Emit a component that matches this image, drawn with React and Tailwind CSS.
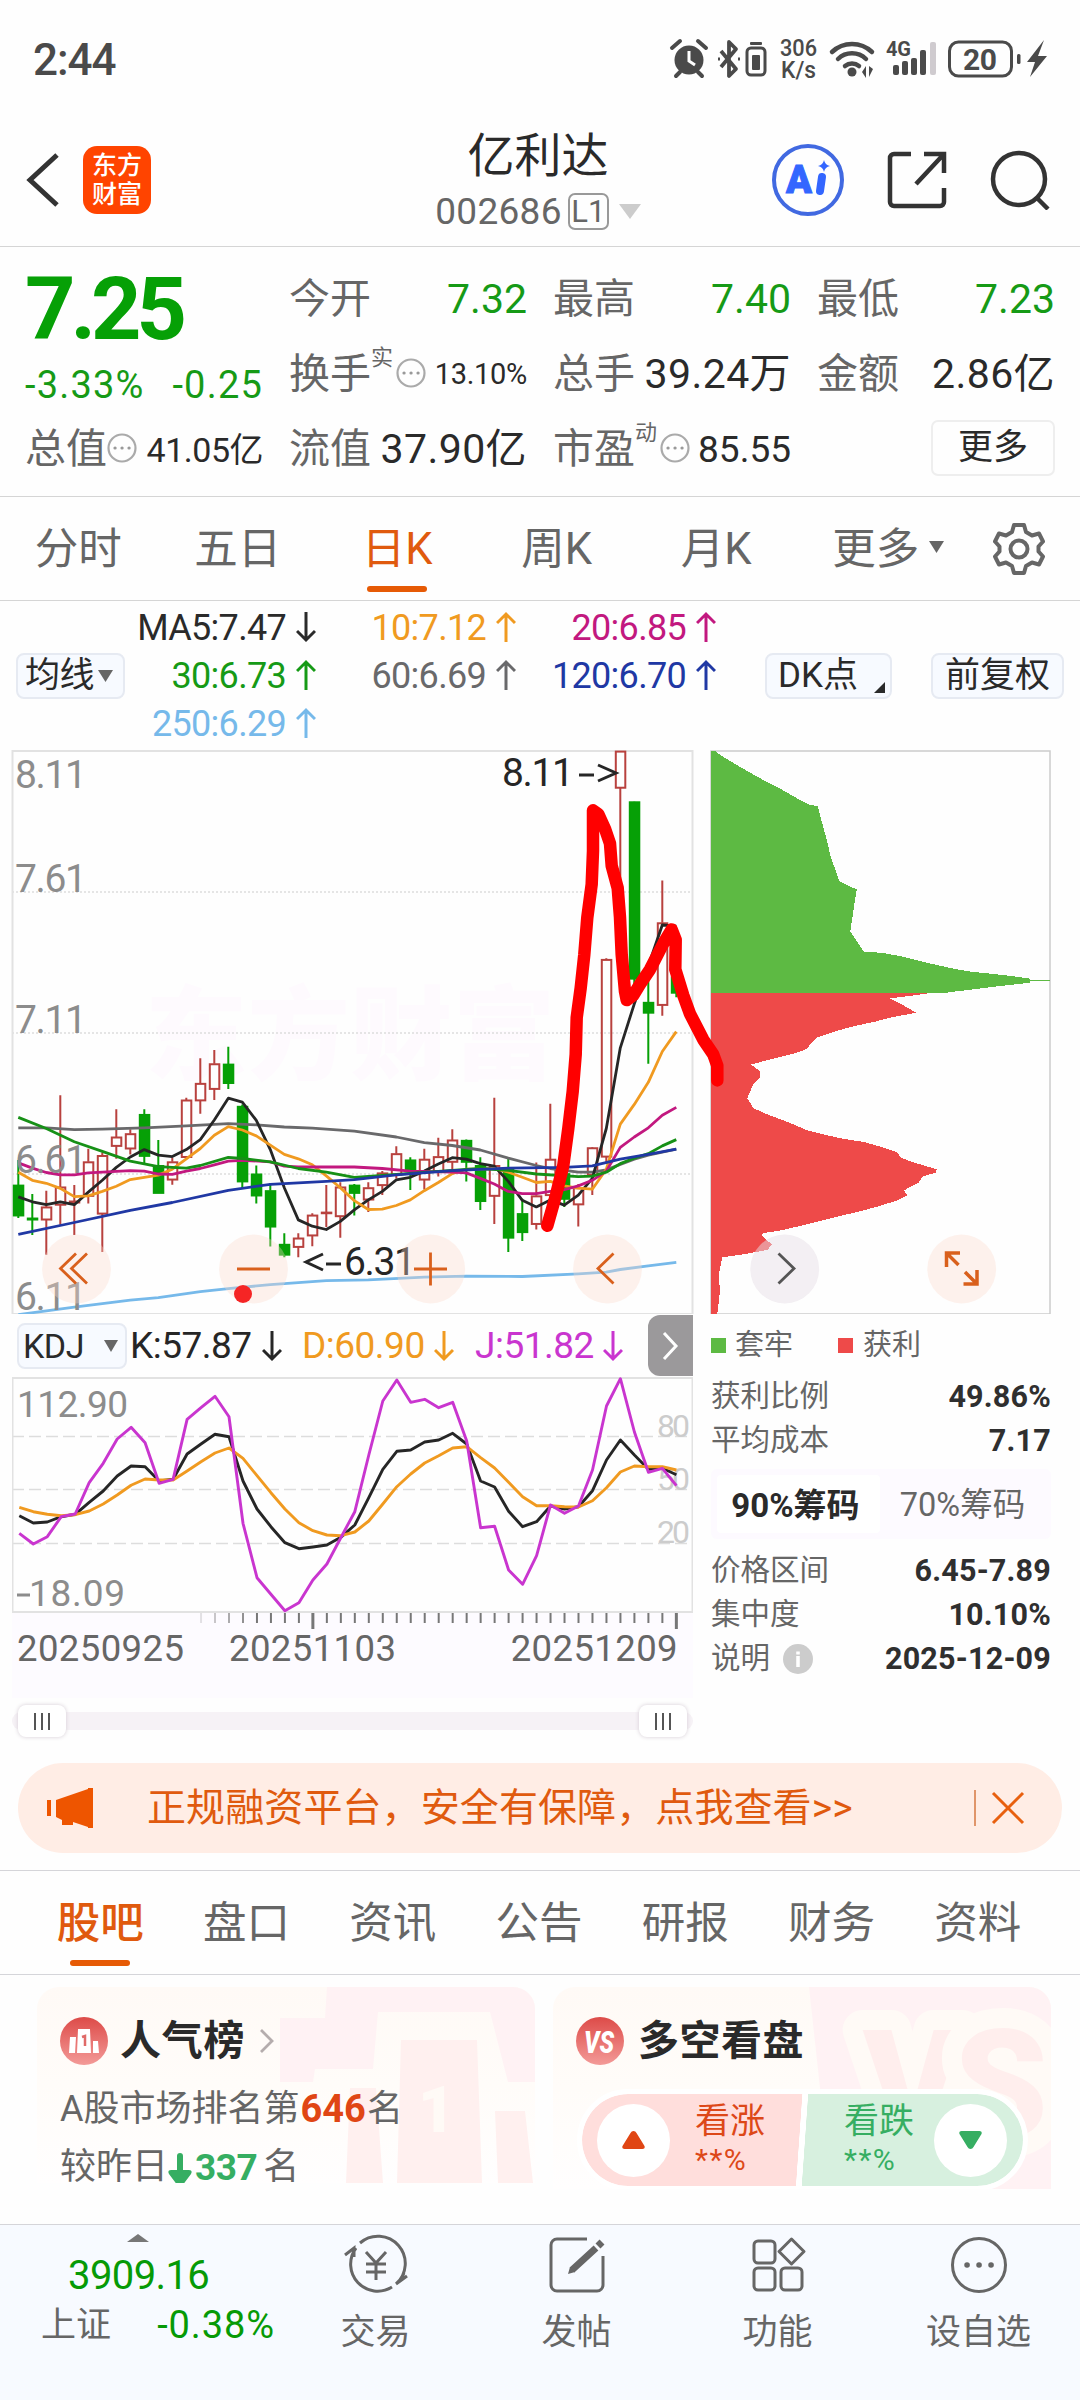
import clsx from 'clsx';

const RED = '#b8413e';
const GREEN = '#06a006';

// [high, body top, body bottom, low, up]
const candles = [
    [1135, 1203, 1285, 1292, 0], [1227, 1292, 1296, 1338, 0], [1218, 1262, 1296, 1391, 1], [960, 1208, 1256, 1310, 1],
    [1203, 1246, 1250, 1338, 1], [1105, 1140, 1232, 1253, 1], [1115, 1123, 1280, 1384, 1], [998, 1073, 1097, 1132, 1],
    [1052, 1064, 1104, 1120, 1], [998, 1012, 1124, 1145, 0], [1081, 1150, 1224, 1224, 0], [1130, 1140, 1188, 1202, 1],
    [967, 973, 1127, 1130, 1], [860, 928, 974, 1010, 1], [838, 875, 943, 973, 1], [829, 876, 927, 943, 0],
    [985, 990, 1193, 1213, 0], [1150, 1173, 1231, 1253, 0], [1197, 1218, 1315, 1369, 0], [1333, 1363, 1391, 1398, 0],
    [1333, 1346, 1370, 1398, 1], [1279, 1284, 1339, 1368, 1], [1203, 1276, 1279, 1316, 1], [1195, 1208, 1287, 1345, 1],
    [1200, 1203, 1224, 1285, 0], [1195, 1210, 1242, 1276, 1], [1165, 1170, 1203, 1230, 1], [1098, 1118, 1175, 1185, 1],
    [1128, 1135, 1165, 1216, 0], [1105, 1133, 1188, 1215, 1], [1075, 1126, 1165, 1180, 1], [1052, 1081, 1140, 1170, 1],
    [1080, 1082, 1140, 1193, 0], [1128, 1150, 1246, 1270, 0], [967, 1150, 1232, 1308, 1], [1130, 1160, 1345, 1384, 0],
    [1240, 1280, 1330, 1354, 0], [1142, 1232, 1308, 1323, 1], [983, 1133, 1230, 1300, 1], [1165, 1172, 1240, 1262, 0],
    [1200, 1210, 1255, 1315, 1], [1100, 1102, 1175, 1230, 1], [590, 593, 1126, 1145, 1], [30, 30, 129, 400, 1],
    [166, 167, 645, 680, 0], [640, 709, 737, 875, 0], [380, 494, 716, 745, 1], [600, 640, 683, 695, 0],
];

// [bar index, value] pairs
const averages = [
    {color: '#69696b', points: [[0, 1048], [2, 1048], [4, 1053], [6, 1052], [9, 1048], [12, 1043], [15, 1037], [17, 1040], [19, 1046], [21, 1049], [24, 1057], [27, 1073], [29, 1088], [31, 1096], [33, 1108], [35, 1130], [37, 1150], [38, 1158], [40, 1168], [41, 1168], [42, 1162], [43, 1147], [44, 1133], [45, 1122], [47, 1106]]},
    {color: '#262626', points: [1235, 1248, 1256, 1248, 1256, 1222, 1190, 1155, 1127, 1107, 1122, 1126, 1107, 1080, 1027, 968, 979, 1028, 1107, 1210, 1297, 1314, 1323, 1301, 1270, 1243, 1220, 1189, 1182, 1165, 1146, 1129, 1133, 1145, 1152, 1193, 1244, 1262, 1243, 1257, 1230, 1185, 1050, 832, 713, 610, 500, 503].map((v, i) => [i, v])},
    {color: '#f09a20', points: [1168, 1190, 1198, 1212, 1234, 1232, 1220, 1206, 1188, 1182, 1176, 1160, 1132, 1104, 1068, 1045, 1054, 1070, 1095, 1120, 1132, 1148, 1178, 1210, 1245, 1269, 1268, 1258, 1243, 1218, 1196, 1172, 1160, 1160, 1158, 1168, 1182, 1196, 1193, 1205, 1211, 1214, 1160, 1038, 985, 925, 842, 788].map((v, i) => [i, v])},
    {color: '#c2187f', points: [[0, 1143], [1, 1157], [2, 1169], [3, 1175], [4, 1175], [5, 1170], [8, 1164], [9, 1165], [10, 1173], [11, 1174], [12, 1165], [13, 1158], [14, 1148], [15, 1138], [16, 1136], [18, 1140], [19, 1152], [20, 1154], [24, 1154], [26, 1158], [28, 1165], [31, 1168], [32, 1170], [33, 1185], [34, 1200], [35, 1220], [36, 1226], [37, 1226], [38, 1220], [39, 1215], [40, 1205], [41, 1190], [42, 1165], [43, 1101], [44, 1073], [45, 1048], [46, 1014], [47, 993]]},
    {color: '#169016', points: [[0, 1020], [2, 1050], [4, 1086], [6, 1112], [8, 1138], [10, 1153], [12, 1157], [13, 1150], [15, 1128], [16, 1131], [18, 1140], [20, 1158], [22, 1168], [24, 1182], [27, 1174], [31, 1163], [33, 1158], [35, 1163], [37, 1173], [40, 1180], [41, 1179], [42, 1168], [43, 1145], [44, 1130], [45, 1118], [46, 1097], [47, 1080]]},
    {color: '#2038a4', points: [[0, 1336], [4, 1304], [8, 1271], [11, 1250], [15, 1217], [18, 1201], [22, 1193], [24, 1188], [27, 1175], [31, 1164], [35, 1157], [39, 1155], [41, 1151], [43, 1133], [45, 1120], [47, 1106]]},
    {color: '#76b9ea', points: [[0, 1553], [4, 1533], [8, 1514], [10, 1507], [13, 1491], [15, 1483], [18, 1472], [22, 1461], [25, 1459], [29, 1452], [32, 1449], [36, 1450], [40, 1443], [42, 1438], [43, 1431], [45, 1421], [47, 1412]]},
];

const trapped = [[32, 30], [45, 30], [65, 43], [100, 62], [140, 83], [190, 108], [240, 131], [290, 157], [328, 175], [353, 179], [365, 220], [378, 262], [392, 315], [418, 382], [470, 404], [462, 450], [451, 518], [491, 572], [545, 575], [595, 583], [650, 595], [705, 607], [765, 619], [820, 627], [877, 632], [935, 638], [990, 645], [990, 648], [1050, 648], [1050, 652], [990, 652], [990, 656], [930, 662], [870, 668], [810, 675], [745, 682], [745, 685], [32, 685]];
const profit = [[32, 685], [685, 685], [627, 692], [570, 698], [612, 718], [648, 737], [573, 750], [522, 762], [470, 772], [418, 784], [350, 804], [318, 836], [280, 848], [200, 866], [153, 877], [180, 895], [180, 912], [160, 930], [142, 968], [160, 995], [197, 1010], [267, 1034], [325, 1056], [418, 1076], [495, 1087], [555, 1103], [590, 1114], [605, 1130], [645, 1143], [710, 1160], [708, 1169], [668, 1180], [655, 1197], [612, 1217], [622, 1230], [590, 1245], [530, 1262], [470, 1276], [390, 1293], [317, 1310], [240, 1326], [188, 1333], [186, 1340], [215, 1363], [203, 1378], [130, 1390], [67, 1398], [56, 1445], [60, 1490], [52, 1552], [32, 1552]];
const scribble = [[592, 1313], [618, 1230], [640, 1150], [655, 1050], [668, 950], [677, 850], [680, 750], [692, 670], [703, 580], [712, 480], [725, 390], [729, 300], [729, 190], [745, 200], [765, 240], [780, 280], [785, 340], [803, 400], [810, 480], [815, 580], [825, 680], [830, 703], [850, 690], [870, 660], [900, 620], [940, 550], [965, 512], [977, 540], [976, 620], [1000, 690], [1020, 740], [1060, 810], [1090, 850], [1102, 880], [1102, 920]];

const kdj = [
    {color: '#262626', values: [617, 639, 636, 620, 613, 577, 543, 498, 468, 470, 513, 508, 432, 402, 373, 380, 513, 597, 650, 698, 716, 711, 705, 682, 645, 563, 478, 424, 420, 396, 390, 370, 402, 513, 531, 604, 650, 635, 588, 597, 590, 542, 450, 390, 435, 478, 475, 494]},
    {color: '#f09a20', values: [592, 605, 613, 617, 614, 603, 582, 555, 526, 507, 510, 510, 483, 455, 429, 414, 445, 497, 548, 597, 638, 662, 675, 677, 666, 633, 582, 530, 492, 459, 437, 414, 410, 443, 474, 517, 560, 587, 587, 590, 591, 572, 533, 486, 468, 470, 470, 480]},
    {color: '#c935cf', values: [670, 702, 680, 620, 612, 518, 460, 387, 352, 398, 520, 508, 328, 293, 259, 320, 640, 803, 853, 902, 878, 810, 762, 683, 605, 435, 273, 210, 277, 268, 293, 277, 393, 653, 649, 780, 823, 737, 585, 610, 588, 480, 288, 206, 366, 487, 475, 527]},
];

const barX = (i) => 18.3 + i * 14;
const barY = (v) => v * 0.37 - 10;
const join = (points) => points.map((p) => p.map((n) => n.toFixed(1)).join(',')).join(' ');

function StatusBar() {
    return (
        <div className="h-[114px] pl-[33px] flex items-center justify-between text-[#4a4a4a]">
            <span className="text-[44px] leading-none font-medium tracking-[-1px] pt-[6px]">2:44</span>
            <svg width="412" height="60" viewBox="668 28 412 60" fill="#4a4a4a" className="mt-1">
                <circle cx="689" cy="59" r="14.5" />
                <path d="M672 47l8-7M706 47l-8-7M680 71l-4 4M698 71l4 4" stroke="#4a4a4a" strokeWidth="4" strokeLinecap="round" />
                <path d="M689 50v10l6 4" stroke="#fff" strokeWidth="3" fill="none" />
                <path d="M721 50l15 18-7 7V41l7 7-15 18" fill="none" stroke="#4a4a4a" strokeWidth="3.8" strokeLinejoin="round" />
                <path d="M718 58h2M738 58h2" stroke="#4a4a4a" strokeWidth="3" />
                <rect x="747" y="47" width="18" height="27" rx="4" fill="none" stroke="#4a4a4a" strokeWidth="3" />
                <rect x="750" y="41" width="12" height="3" rx="1" />
                <rect x="752" y="54" width="8" height="15" rx="1" />
                <text x="780" y="55" fontSize="23" fontWeight="500" textLength="37" lengthAdjust="spacingAndGlyphs">306</text>
                <text x="781" y="77" fontSize="23" fontWeight="500" textLength="35" lengthAdjust="spacingAndGlyphs">K/s</text>
                <g fill="none" stroke="#4a4a4a" strokeWidth="4.5" strokeLinecap="round">
                    <path d="M832 51a29 29 0 0 1 40 0" />
                    <path d="M838 58a20 20 0 0 1 28 0" />
                    <path d="M845 65a11 11 0 0 1 14 0" />
                </g>
                <circle cx="852" cy="71" r="4.5" />
                <path d="M862 71l4-6v12zM873 68l-4 8V65z" />
                <text x="886" y="55" fontSize="20" fontWeight="700" textLength="25">4G</text>
                <rect x="893" y="64" width="6" height="10" rx="2" />
                <rect x="902" y="60" width="6" height="14" rx="2" />
                <rect x="911" y="57" width="6" height="17" rx="2" />
                <rect x="920" y="49" width="6" height="25" rx="2" />
                <rect x="930" y="41" width="6" height="33" rx="2" fill="#cfcbcf" />
                <rect x="949.500" y="41" width="62" height="34" rx="9" fill="none" stroke="#4a4a4a" strokeWidth="3" />
                <text x="963" y="69" fontSize="30" fontWeight="700" textLength="34">20</text>
                <rect x="1017" y="53" width="3.500" height="10" rx="1.500" />
                <path d="M1044 39l-17 22h8l-5 15 17-21h-9z" />
            </svg>
        </div>
    );
}

function Header() {
    return (
        <div className="h-[133px] border-b border-[#d5d5d5] flex items-center justify-between pl-[26px] pr-[30px] text-[#2a2a2a]">
            <div className="w-[300px] flex items-center gap-[23px]">
                <svg width="34" height="56" viewBox="0 0 34 56" fill="none" stroke="#333" strokeWidth="5">
                    <path d="M31 3L4 28l27 25" />
                </svg>
                <div className="size-[68px] rounded-[14px] bg-[#ff4400] text-white font-medium text-[25px] leading-[29px] text-center pt-[5px]">
                    东方<br />财富
                </div>
            </div>
            <div className="flex flex-col items-center pt-[4px]">
                <h1 className="text-[47px] leading-[56px]">亿利达</h1>
                <div className="flex items-center gap-[6px] mt-[3px] text-[#666]">
                    <span className="text-[37px] leading-[50px] tracking-[0.3px]">002686</span>
                    <span className="w-[41px] h-[37px] rounded-[7px] border-2 border-[#999] text-[31px] leading-[34px] text-center">L1</span>
                    <svg width="22" height="15" className="ml-[4px]"><path d="M0 0h22L11 15z" fill="#ccc" /></svg>
                </div>
            </div>
            <div className="w-[300px] flex items-center justify-end gap-[43px]">
                <svg width="72" height="72" viewBox="0 0 72 72">
                    <circle cx="36" cy="36" r="34" fill="none" stroke="#4169e1" strokeWidth="4" />
                    <text x="14" y="49" fontSize="38" fontWeight="900" fill="#3366ff" stroke="#3366ff">A</text>
                    <path d="M50 33l-2 14" stroke="#3366ff" strokeWidth="8" strokeLinecap="round" />
                    <path d="M52 16q1 5 6 6q-5 1-6 6q-1-5-6-6q5-1 6-6z" fill="#3366ff" />
                </svg>
                <svg width="60" height="60" viewBox="0 0 60 60" fill="none" stroke="#333" strokeWidth="4.500">
                    <path d="M24 4H7a4 4 0 0 0-4 4v44a4 4 0 0 0 4 4h46a4 4 0 0 0 4-4V38M37 4h20v19M57 4L29 34" />
                </svg>
                <svg width="60" height="60" viewBox="0 0 60 60" fill="none" stroke="#333" strokeWidth="4.500">
                    <circle cx="29" cy="29" r="26" />
                    <path d="M47 48l11 11" />
                </svg>
            </div>
        </div>
    );
}

function Dots() {
    return (
        <svg width="30" height="30" viewBox="0 0 30 30" className="shrink-0 -mt-[4px]">
            <circle cx="15" cy="15" r="13.500" fill="none" stroke="#aaa" strokeWidth="2.200" />
            <path d="M8 15h.1M15 15h.1M22 15h.1" stroke="#999" strokeWidth="3.200" strokeLinecap="round" />
        </svg>
    );
}

function Quote({label, value, sup, dots, className}) {
    return (
        <div className="h-[75px] flex items-center justify-between whitespace-nowrap">
            <span className="flex items-center text-[#666] text-[41px]">
                {label}
                {sup && <span className="text-[22px] w-[25px] -mt-[34px] leading-none">{sup}</span>}
                {dots && <Dots />}
            </span>
            <span className={clsx('text-[#2a2a2a]', className || 'text-[41px] tracking-[0.4px]')}>{value}</span>
        </div>
    );
}

function Quotes() {
    return (
        <div className="h-[250px] pt-[15px] px-[25px] border-b border-[#d5d5d5] grid grid-cols-4 gap-x-[26px] leading-none">
            <div>
                <div className="h-[97px] pt-[3px] text-[88px] font-bold text-[#06a006] tracking-[-5px]">7.25</div>
                <div className="h-[53px] pt-[7px] flex justify-between text-[38px] text-[#169a16] tracking-[1.2px]">
                    <span>-3.33%</span><span>-0.25</span>
                </div>
                <Quote label="总值" value="41.05亿" dots className="text-[34px] tracking-[-0.5px]" />
            </div>
            <div>
                <Quote label="今开" value="7.32" className="text-[41px] text-[#169a16]" />
                <Quote label="换手" value="13.10%" sup="实" dots className="text-[29px] tracking-[-0.3px]" />
                <Quote label="流值" value="37.90亿" />
            </div>
            <div>
                <Quote label="最高" value="7.40" className="text-[41px] text-[#169a16]" />
                <Quote label="总手" value="39.24万" />
                <Quote label="市盈" value="85.55" sup="动" dots className="text-[37px]" />
            </div>
            <div>
                <Quote label="最低" value="7.23" className="text-[41px] text-[#169a16]" />
                <Quote label="金额" value="2.86亿" />
                <div className="h-[72px] flex items-center justify-end">
                    <button className="w-[124px] h-[56px] rounded-[7px] border-2 border-[#eee] text-[35px] leading-none text-[#2a2a2a] pb-[2px]">更多</button>
                </div>
            </div>
        </div>
    );
}

function PeriodTabs() {
    const tabs = ['分时', '五日', '日K', '周K', '月K', '更多'];
    return (
        <div className="h-[104px] flex border-b border-[#d5d5d5] text-[#666] text-[43.500px] leading-none">
            {tabs.map((tab, i) => (
                <div key={tab} className={clsx('relative w-[159.500px] pt-[3px] pr-[3px] flex items-center justify-center', i === 2 && 'text-[#e05a0e]')}>
                    {tab}
                    {i === 2 && <div className="absolute bottom-[8px] w-[60px] h-[6px] rounded-full bg-[#e65a05]" />}
                    {i === 5 && <svg width="15" height="12" className="absolute right-[13px] top-[44px]"><path d="M0 0h15l-7.500 12z" fill="#666" /></svg>}
                </div>
            ))}
            <div className="flex-1 flex items-center justify-center">
                <svg width="52" height="54" viewBox="0 0 52 54" fill="none" stroke="#666" strokeWidth="4" strokeLinejoin="round">
                    <path d="M21 3h10l2 7 6 3.500 7-2 4 8-4.500 5v5l4.500 5-4 8-7-2-6 3.500-2 7H21l-2-7-6-3.500-7 2-4-8 4.500-5v-5L2 19.500l4-8 7 2 6-3.500z" />
                    <circle cx="26" cy="27" r="8.500" />
                </svg>
            </div>
        </div>
    );
}

function Arrow({up}) {
    return (
        <svg width="20" height="32" viewBox="0 0 20 32" fill="none" stroke="currentColor" strokeWidth="3">
            <path d={up ? 'M10 31V3M1 12l9-9 9 9' : 'M10 1v28M1 20l9 9 9-9'} />
        </svg>
    );
}

function Average({text, up, className}) {
    return (
        <div className={clsx('h-12 flex items-center justify-end gap-[10px]', className)}>
            <span className="pt-[2px]">{text}</span>
            <Arrow up={up} />
        </div>
    );
}

function AverageLegend() {
    return (
        <div className="h-[149px] pl-4 flex items-center text-[#2a2a2a] leading-none">
            <button className="w-[109px] h-[46px] flex items-center justify-center gap-1 rounded-lg border-2 border-[#e6eaf2] bg-[#f7faff] text-[35px]">
                <span className="tracking-[-0.5px] -ml-[3px]">均线</span>
                <svg width="15" height="12"><path d="M0 0h15l-7.500 12z" fill="#666" /></svg>
            </button>
            <div className="grid grid-cols-[191px_200px_200px] text-[36px] tracking-[-0.7px] self-start pt-[2px]">
                <Average text="MA5:7.47" />
                <Average text="10:7.12" up className="text-[#f09a20]" />
                <Average text="20:6.85" up className="text-[#c2187f]" />
                <Average text="30:6.73" up className="text-[#169a16]" />
                <Average text="60:6.69" up className="text-[#69696b]" />
                <Average text="120:6.70" up className="text-[#2038a4]" />
                <Average text="250:6.29" up className="text-[#76b9ea]" />
            </div>
            <button className="relative ml-[49px] w-[127px] h-[46px] rounded-lg border-2 border-[#e6eaf2] bg-[#f7faff] text-[35px] text-left pl-[11px]">
                DK点
                <svg width="11" height="11" className="absolute right-[5px] bottom-[4px]"><path d="M11 0v11H0z" fill="#2a2a2a" /></svg>
            </button>
            <button className="ml-[39px] w-[133px] h-[46px] rounded-lg border-2 border-[#e6eaf2] bg-[#f7faff] text-[35px]">前复权</button>
        </div>
    );
}

function PriceChart() {
    return (
        <svg width="1080" height="564" viewBox="0 0 1080 564" className="block">
            <text x="145" y="322" fontSize="102" fontWeight="900" fill="#fefafe" textLength="410">东方财富</text>
            <g stroke="#ddd" strokeWidth="1.500" strokeDasharray="2 2">
                <path d="M12 142H692M12 283H692M12 424H692" />
            </g>
            <rect x="12.500" y="1" width="680" height="563" fill="none" stroke="#e2e2e2" strokeWidth="2" />
            {candles.map(([high, top, bottom, low, up], i) => (
                <g key={i} stroke={up ? RED : GREEN} strokeWidth="2" fill={up ? 'none' : GREEN}>
                    <path d={`M${barX(i)} ${barY(high)}V${barY(top)}M${barX(i)} ${barY(bottom)}V${barY(low)}`} />
                    <rect x={barX(i) - 4.5} y={barY(top) + 0.5} width="9.500" height={Math.max(barY(bottom) - barY(top) - 0.5, 0.1)} />
                </g>
            ))}
            {averages.map((line) => (
                <polyline key={line.color} points={join(line.points.map(([i, v]) => [barX(i), barY(v)]))} fill="none" stroke={line.color} strokeWidth="2.800" strokeLinejoin="round" />
            ))}
            <g fontSize="39" fill="#8c8c8c">
                <text x="15" y="38" textLength="72">8.11</text>
                <text x="15" y="142" textLength="72">7.61</text>
                <text x="15" y="283" textLength="72">7.11</text>
                <text x="15" y="423" textLength="72">6.61</text>
                <text x="15" y="560" textLength="72">6.11</text>
            </g>
            <g fill="#262626" fontSize="39">
                <text x="502" y="36" textLength="72">8.11</text>
                <text x="344" y="525" textLength="72">6.31</text>
                <path d="M579 25h15M598 15l18 8-18 8" fill="none" stroke="#262626" strokeWidth="3" />
                <path d="M323 504l-17 8 17 8M326 514h15" fill="none" stroke="#262626" strokeWidth="3" />
            </g>
            <rect x="711" y="1" width="339" height="563" fill="none" stroke="#ccc" strokeWidth="1.500" />
            <g shapeRendering="crispEdges">
                <polygon points={join(trapped.map(([x, y]) => [700 + x / 3, barY(y)]))} fill="#5dba43" />
                <polygon points={join(profit.map(([x, y]) => [700 + x / 3, barY(y)]))} fill="#ee4a49" />
            </g>
            <g fill="#fbd9ca" fillOpacity="0.35">
                <circle cx="76.500" cy="519" r="34.400" />
                <circle cx="253.500" cy="519" r="34.400" />
                <circle cx="430.700" cy="519" r="34.400" />
                <circle cx="607.500" cy="519" r="34.400" />
                <circle cx="961.700" cy="519" r="34.400" />
            </g>
            <circle cx="784.700" cy="519" r="34.400" fill="#e8dfe8" fillOpacity="0.5" />
            <g fill="none" stroke="#d9601c" strokeWidth="2.800">
                <path d="M76 503.500l-15.500 15 15.500 15M87 503.500l-15.500 15 15.500 15" />
                <path d="M237 519h33" />
                <path d="M414 519h33M430.500 502.500v33" />
                <path d="M613.500 503.500l-15.500 15 15.500 15" />
                <path d="M960 503h-13.500v14M946.500 503l12 12M963.500 534H977v-14M977 534l-12-12" strokeWidth="3.500" />
            </g>
            <path d="M778.500 503.500l15.500 15-15.500 15" fill="none" stroke="#555" strokeWidth="2.800" />
            <circle cx="243" cy="544" r="9" fill="#f52525" />
            <polyline points={join(scribble.map(([x, y]) => [350 + x / 3, barY(y)]))} fill="none" stroke="#f00" strokeWidth="12.500" strokeLinecap="round" strokeLinejoin="round" />
        </svg>
    );
}

function KdjHeader() {
    return (
        <div className="h-[63px] pl-[5px] flex items-center text-[37px] leading-none tracking-[-0.5px]">
            <button className="w-[110px] h-[46px] pl-[4px] pr-[7px] mr-[3px] flex items-center justify-between rounded-lg border-2 border-[#e6eaf2] bg-[#f7faff] text-[34px] text-[#2a2a2a]">
                KDJ
                <svg width="14" height="12"><path d="M0 0h14l-7 12z" fill="#666" /></svg>
            </button>
            <div className="w-[172px] flex items-center gap-[10px] text-[#262626]">K:57.87<Arrow /></div>
            <div className="w-[173px] flex items-center gap-[9px] text-[#f09a20]">D:60.90<Arrow /></div>
            <div className="flex items-center gap-[9px] text-[#c935cf]">J:51.82<Arrow /></div>
            <div className="ml-auto w-[45px] h-[61px] rounded-l-xl bg-[#9b999b] flex items-center justify-center">
                <svg width="17" height="28" viewBox="0 0 17 28" fill="none" stroke="#fff" strokeWidth="3"><path d="M2 1l12 13L2 27" /></svg>
            </div>
        </div>
    );
}

function KdjChart() {
    const y = (v) => (v - 201) / 3;
    return (
        <svg width="681" height="236" viewBox="12 0 681 236" className="block">
            <path d="M12 59.500H692M12 112.500H692M12 166.500H692" stroke="#ddd" strokeWidth="1.500" strokeDasharray="12 5" />
            <g fill="#ccc" fontSize="32">
                <text x="657" y="60" textLength="33">80</text>
                <text x="657" y="113" textLength="33">50</text>
                <text x="657" y="166" textLength="33">20</text>
            </g>
            <g fill="#8c8c8c" fontSize="37">
                <text x="17" y="40" textLength="111">112.90</text>
                <text x="29" y="229" textLength="96">18.09</text>
                <path d="M17 218h13" stroke="#8c8c8c" strokeWidth="3" />
            </g>
            <rect x="12.500" y="1" width="680" height="234" fill="none" stroke="#e2e2e2" strokeWidth="2" />
            {kdj.map((line) => (
                <polyline key={line.color} points={join(line.values.map((v, i) => [19.3 + i * 13.98, y(v)]))} fill="none" stroke={line.color} strokeWidth="2.900" strokeLinejoin="round" />
            ))}
        </svg>
    );
}

function DateAxis() {
    return (
        <div className="h-[85px] bg-[#fdfbff] text-[#666]">
            <svg width="681" height="16" viewBox="12 0 681 16" className="block">
                {kdj[0].values.map((_, i) => i > 12 && (
                    <path key={i} d={`M${19.3 + i * 13.98} 0v${i === 21 || i === 47 ? 16 : 10}`} stroke="#777" strokeOpacity={Math.min(1, (i - 12) / 5)} strokeWidth={i === 21 || i === 47 ? 3 : 2} />
                ))}
            </svg>
            <div className="flex text-[36.500px] leading-[40px] tracking-[0.4px] pl-[5px] pr-[15px]">
                <span className="w-[212px]">20250925</span>
                <span>20251103</span>
                <span className="ml-auto">20251209</span>
            </div>
        </div>
    );
}

function Handle() {
    return (
        <div className="w-[48px] h-[32px] rounded-lg bg-white shadow-[0_0_4px_#d5cdd5] flex items-center justify-center gap-[5px]">
            <div className="w-[2px] h-[17px] bg-[#555]" />
            <div className="w-[2px] h-[17px] bg-[#555]" />
            <div className="w-[2px] h-[17px] bg-[#555]" />
        </div>
    );
}

function Stat({label, value, info}) {
    return (
        <div className="h-11 pt-[2px] flex items-center justify-between text-[29.500px]">
            <span className="flex items-center gap-[13px] text-[#666]">
                {label}
                {info && (
                    <svg width="30" height="30" viewBox="0 0 30 30">
                        <circle cx="15" cy="15" r="15" fill="#ccc" />
                        <path d="M15 12v11M15 7.500v3" stroke="#fff" strokeWidth="3.500" />
                    </svg>
                )}
            </span>
            <span className="font-bold text-[30.500px] text-[#2f2f2f] tracking-[0.2px]">{value}</span>
        </div>
    );
}

function ChipStats() {
    return (
        <div className="w-[340px] leading-none">
            <div className="h-[60px] pt-[3px] flex items-center text-[29px] text-[#666]">
                <i className="size-[15px] bg-[#5dba43] mr-[9px]" />
                <span className="w-[103px]">套牢</span>
                <i className="size-[15px] bg-[#ee4a49] mr-[10px]" />
                <span>获利</span>
            </div>
            <Stat label="获利比例" value="49.86%" />
            <Stat label="平均成本" value="7.17" />
            <div className="mt-[7px] mb-[9px] h-[70px] p-[6px] flex rounded-md bg-[#fdfaff] text-[32.500px] text-[#666]">
                <div className="w-[163px] pt-[2px] pr-[6px] flex items-center justify-center rounded bg-white font-bold text-[33px] text-[#2a2a2a]">90%筹码</div>
                <div className="flex-1 pt-[2px] flex items-center justify-center">70%筹码</div>
            </div>
            <Stat label="价格区间" value="6.45-7.89" />
            <Stat label="集中度" value="10.10%" />
            <Stat label="说明" value="2025-12-09" info />
        </div>
    );
}

function Banner() {
    return (
        <div className="mx-[18px] h-[90px] rounded-full bg-[#ffede5] flex items-center text-[#e05a0e] text-[39px] leading-none pl-[29px] pr-[37px]">
            <svg width="46" height="40" viewBox="0 0 46 40" fill="#ee5500">
                <path d="M0 12h4v16H0zM9 12L41 1V0h5v40h-5v-1l-15-5v3H15v-5l-6-3z" />
            </svg>
            <span className="ml-[54px] tracking-[0.1px]">正规融资平台，安全有保障，点我查看&gt;&gt;</span>
            <div className="ml-auto w-[2px] h-9 bg-[#e0956a]" />
            <svg width="34" height="34" viewBox="0 0 34 34" fill="none" stroke="#e8600f" strokeWidth="3" className="ml-[15px]">
                <path d="M2 2l30 30M32 2L2 32" />
            </svg>
        </div>
    );
}

function InfoTabs() {
    const tabs = ['股吧', '盘口', '资讯', '公告', '研报', '财务', '资料'];
    return (
        <div className="mt-[17px] h-[105px] px-[28px] flex border-y border-[#d5d5d9] text-[#666] text-[43.500px] leading-none">
            {tabs.map((tab, i) => (
                <div key={tab} className={clsx('relative flex-1 pt-[3px] pr-[2px] flex items-center justify-center', i === 0 && 'text-[#e05a0e] font-medium')}>
                    {tab}
                    {i === 0 && <div className="absolute bottom-[8px] w-[60px] h-[6px] rounded-full bg-[#e65a05]" />}
                </div>
            ))}
        </div>
    );
}

function RankCard() {
    return (
        <div className="relative w-[498px] h-[196px] rounded-t-[22px] overflow-hidden bg-linear-to-b from-[#fffaf6] via-[#fffcf9] to-[#fffefe] pl-[23px] leading-none text-[36px] text-[#666]">
            <svg width="255" height="196" viewBox="-5 0 255 196" className="absolute right-0 top-0">
                <path d="M42 0h208v95h-27l-18-70H93l-5 57H30l-2 13h-33V31h45z" fill="#fff2f4" />
                <path d="M116 53h76l5 143h-85zM65 101h26l7 95H61zM210 124h30l8 72h-35z" fill="#fff0ef" />
                <text x="133" y="145" fontSize="64" fontWeight="900" fill="#fffaf6">1</text>
            </svg>
            <div className="relative h-[84px] pt-[24px] flex items-center text-[41px] font-bold text-[#2a2a2a]">
                <svg width="48" height="48" viewBox="0 0 48 48">
                    <linearGradient id="badge" x2="0" y2="1"><stop stopColor="#dd4b48" /><stop offset="1" stopColor="#f39a98" /></linearGradient>
                    <circle cx="24" cy="24" r="24" fill="url(#badge)" />
                    <path d="M10 20h6l-1 16H9zM18 12h12l1 24H17zM33 24h5l1 12h-6z" fill="#fff" />
                    <path d="M22 20l3-1v10" fill="none" stroke="#e06a68" strokeWidth="2.500" />
                </svg>
                <span className="ml-[12px] tracking-[0.7px]">人气榜</span>
                <svg width="15" height="24" viewBox="0 0 15 24" fill="none" stroke="#b5adad" strokeWidth="2.800" className="ml-[14px]"><path d="M2 1l11 11L2 23" /></svg>
            </div>
            <div className="relative h-[76px] flex items-center">
                A股市场排名第<b className="text-[38px] text-[#e04614] mx-[1px]">646</b>名
            </div>
            <div className="relative h-[40px] flex items-center">
                较昨日
                <svg width="24" height="34" viewBox="0 0 24 34" fill="#36ae62" className="mt-[5px]"><path d="M9 3q0-3 3-3t3 3v14h6q4 0 2 4L14 33q-2 2-4 0L1 21q-2-4 2-4h6z" /></svg>
                <b className="text-[37px] font-bold text-[#36ae62] ml-[3px] mr-[6px] tracking-[-0.5px]">337</b>名
            </div>
        </div>
    );
}

function VoteCard() {
    return (
        <div className="relative w-[498px] h-[202px] rounded-t-[22px] overflow-hidden bg-linear-to-b from-[#fffaf6] via-[#fffcf9] to-[#fffefe] pl-[23px] leading-none">
            <svg width="250" height="202" className="absolute right-0 top-0">
                <path d="M8 0h242v202H30z" fill="#fff2f4" />
                <text x="62" y="150" fontSize="150" fontWeight="900" textLength="185" fill="#ffeeed" stroke="#fffaf6" strokeWidth="40" strokeLinejoin="round" paintOrder="stroke">VS</text>
            </svg>
            <div className="relative h-[84px] pt-[24px] flex items-center text-[41px] font-bold text-[#2a2a2a]">
                <svg width="48" height="48" viewBox="0 0 48 48">
                    <circle cx="24" cy="24" r="24" fill="url(#badge)" />
                    <text x="8" y="36" fontSize="31" fontWeight="900" fontStyle="italic" fill="#fff" textLength="30" lengthAdjust="spacingAndGlyphs">VS</text>
                </svg>
                <span className="ml-[14px] tracking-[0.5px]">多空看盘</span>
            </div>
            <div className="relative ml-[1px] mt-[18px] w-[451px] h-[102px] border-[5px] border-white rounded-full overflow-hidden bg-white">
                <div className="h-full flex rounded-full bg-linear-[94deg,#ffdedc_49.2%,#fff_49.300%,#fff_50.500%,#d7f0df_50.600%] text-[35px]">
                    <div className="flex-1 pl-[15px] flex items-center gap-[25px] text-[#dd4818]">
                        <div className="size-[73px] rounded-full bg-white flex items-center justify-center">
                            <svg width="23" height="18"><path d="M11.500 0q2 0 3 2l8 13q1 3-2 3h-18q-3 0-2-3l8-13q1-2 3-2z" fill="#e04614" /></svg>
                        </div>
                        <div>
                            <div className="h-[38px]">看涨</div>
                            <div className="h-[35px] text-[30px] leading-[35px] tracking-[1.500px]">**%</div>
                        </div>
                    </div>
                    <div className="flex-1 pr-[16px] flex items-center justify-end gap-[20px] text-[#36ae62]">
                        <div>
                            <div className="h-[38px]">看跌</div>
                            <div className="h-[35px] text-[30px] leading-[35px] tracking-[1.500px]">**%</div>
                        </div>
                        <div className="size-[73px] rounded-full bg-white flex items-center justify-center">
                            <svg width="23" height="18"><path d="M11.500 18q2 0 3-2l8-13q1-3-2-3h-18q-3 0-2 3l8 13q1 2 3 2z" fill="#36ae62" /></svg>
                        </div>
                    </div>
                </div>
            </div>
        </div>
    );
}

function NavItem({label, children}) {
    return (
        <div className="w-[201px] pt-[8px] flex flex-col items-center">
            <svg width="66" height="64" viewBox="-33 -32 66 64" fill="none" stroke="#666" strokeWidth="3">{children}</svg>
            <span className="mt-[18px]">{label}</span>
        </div>
    );
}

function BottomNav() {
    return (
        <div className="h-[176px] border-t border-[#d5d5d9] bg-[#f7faff] flex text-[35px] leading-none text-[#666]">
            <div className="w-[275px] shrink-0 pt-[9px]">
                <svg width="22" height="8" className="ml-[127px]"><path d="M0 8L11 0l11 8z" fill="#777" /></svg>
                <div className="mt-[14px] pl-[68px] text-[40px] text-[#069a06] tracking-[-0.6px]">3909.16</div>
                <div className="mt-[10px] pl-[41px] flex items-center justify-between">
                    <span>上证</span>
                    <span className="text-[38px] text-[#069a06] tracking-[0.9px]">-0.38%</span>
                </div>
            </div>
            <NavItem label="交易">
                <path d="M-16-22A27 27 0 0 1 20 19M20 19l11-8M28 8l-3 7M16 22A27 27 0 0 1-20-17M-31-10l9-7v9" />
                <path d="M-10-13L0-2l10-11M0-2v17M-10-1h20M-10 7h20" />
            </NavItem>
            <NavItem label="发帖">
                <path d="M10-26h-30a6 6 0 0 0-6 6v40a6 6 0 0 0 6 6h40a6 6 0 0 0 6-6V-9" />
                <path d="M19-17L-5 5M21-19l4-4" strokeWidth="7" />
                <path d="M-9 9l2-7 5 5z" fill="#666" stroke="none" />
            </NavItem>
            <NavItem label="功能">
                <rect x="-24" y="-24" width="21" height="22" rx="4" />
                <path d="M13.500-26L26-13.500 13.500-1 1-13.500z" strokeLinejoin="round" />
                <rect x="-24" y="3" width="21" height="22" rx="4" />
                <rect x="3" y="3" width="21" height="22" rx="4" />
            </NavItem>
            <NavItem label="设自选">
                <circle r="26.500" />
                <path d="M-12 0h.1M0 0h.1M12 0h.1" strokeWidth="5.500" strokeLinecap="round" />
            </NavItem>
        </div>
    );
}

export default function App() {
    return (
        <div className="w-[1080px] h-[2400px] overflow-hidden flex flex-col bg-[#fefefe] font-['Roboto','Noto_Sans_CJK_SC',sans-serif]">
            <StatusBar />
            <Header />
            <Quotes />
            <PeriodTabs />
            <AverageLegend />
            <PriceChart />
            <div className="h-[449px] pl-[12px] flex gap-[18px]">
                <div className="w-[681px]">
                    <KdjHeader />
                    <KdjChart />
                    <DateAxis />
                    <div className="mt-[14px] h-[18px] px-[6px] flex items-center justify-between rounded-full bg-[#f6f2f6]">
                        <Handle />
                        <Handle />
                    </div>
                </div>
                <ChipStats />
            </div>
            <Banner />
            <InfoTabs />
            <div className="h-[249px] pt-[12px] px-[37px] flex gap-[18px] w-[1090px]">
                <RankCard />
                <VoteCard />
            </div>
            <BottomNav />
        </div>
    );
}
